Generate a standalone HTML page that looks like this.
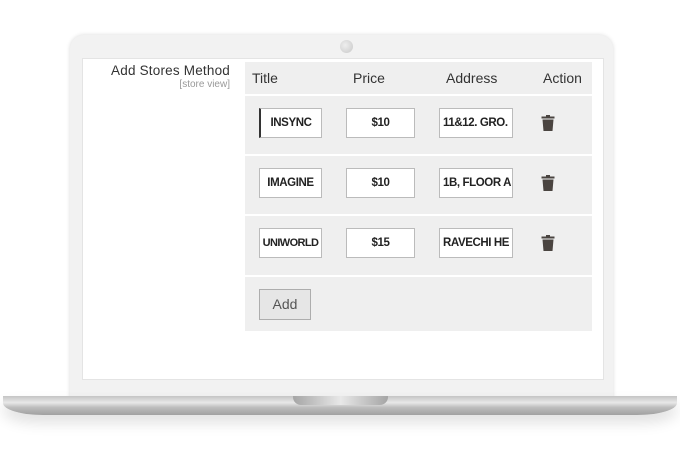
<!DOCTYPE html>
<html><head><style>
*{margin:0;padding:0;box-sizing:border-box}
body{width:680px;height:450px;background:#fff;position:relative;overflow:hidden;font-family:"Liberation Sans",sans-serif}
.bezel{position:absolute;left:70px;top:35px;width:543px;height:365px;background:#f2f2f2;border-radius:14px 14px 0 0;box-shadow:0 0 4px rgba(0,0,0,.15)}
.cam{position:absolute;left:340px;top:40px;width:13px;height:13px;border-radius:50%;background:radial-gradient(circle at 40% 40%,#eee,#c8c8c8)}
.screen{position:absolute;left:82px;top:58px;width:522px;height:322px;background:#fff;border:1px solid #e4e4e4}
.base{position:absolute;left:3px;top:396px;width:674px;height:19px;border-radius:0 0 40px 40px/0 0 12px 12px;background:linear-gradient(#c4c4c4,#e8e8e8 35%,#bdbdbd 60%,#a0a0a0);box-shadow:0 8px 14px rgba(0,0,0,.12)}
.notch{position:absolute;left:293px;top:396px;width:95px;height:9px;border-radius:0 0 8px 8px;background:linear-gradient(90deg,#a5a5a5,#e8e8e8 50%,#a5a5a5)}
.lbl{position:absolute;right:450px;top:63px;text-align:right;color:#333;font-size:13.5px;letter-spacing:.2px}
.lbl small{display:block;font-size:10px;color:#999;margin-top:1px;letter-spacing:0}
.tbl{position:absolute;left:245px;top:62px;width:347px;height:269px;background:#efefef}
.hd{position:absolute;top:8px;font-size:14px;color:#333}
.sep{position:absolute;left:0;width:347px;height:2px;background:#fff}
.in{position:absolute;height:30px;background:#fff;border:1px solid #bbb;font-size:11.5px;letter-spacing:-.4px;font-weight:bold;color:#222;text-align:center;line-height:28px;overflow:hidden;white-space:nowrap}
.add{position:absolute;left:14px;top:227px;width:52px;height:31px;background:#e6e6e6;border:1px solid #adadad;color:#555;font-size:14px;text-align:center;line-height:29px}
.tr{position:absolute;left:296px}
</style></head><body>
<div class="bezel"></div>
<div class="cam"></div>
<div class="screen"></div>
<div class="lbl">Add Stores Method<small>[store view]</small></div>
<div class="tbl">
<div class="hd" style="left:7px">Title</div>
<div class="hd" style="left:108px">Price</div>
<div class="hd" style="left:201px">Address</div>
<div class="hd" style="left:298px">Action</div>
<div class="sep" style="top:32px"></div>
<div class="sep" style="top:92px"></div>
<div class="sep" style="top:152px"></div>
<div class="sep" style="top:213px"></div>
<div class="in" style="left:14px;top:46px;width:63px;border-left:2px solid #333">INSYNC</div>
<div class="in" style="left:101px;top:46px;width:69px">$10</div>
<div class="in" style="left:194px;top:46px;width:74px;text-align:left;padding-left:3px">11&amp;12. GRO.</div>
<div class="in" style="left:14px;top:106px;width:63px">IMAGINE</div>
<div class="in" style="left:101px;top:106px;width:69px">$10</div>
<div class="in" style="left:194px;top:106px;width:74px;text-align:left;padding-left:3px">1B, FLOOR A</div>
<div class="in" style="left:14px;top:166px;width:63px;font-size:11px;letter-spacing:-.6px">UNIWORLD</div>
<div class="in" style="left:101px;top:166px;width:69px">$15</div>
<div class="in" style="left:194px;top:166px;width:74px;text-align:left;padding-left:3px">RAVECHI HE</div>
<svg class="tr" style="top:52px" width="14" height="18" viewBox="0 0 14 18"><path d="M5 1h4v1.5h4.5v2H.5v-2H5z M1.5 5.5h11l-1 11.5h-9z" fill="#4a4440"/></svg>
<svg class="tr" style="top:112px" width="14" height="18" viewBox="0 0 14 18"><path d="M5 1h4v1.5h4.5v2H.5v-2H5z M1.5 5.5h11l-1 11.5h-9z" fill="#4a4440"/></svg>
<svg class="tr" style="top:172px" width="14" height="18" viewBox="0 0 14 18"><path d="M5 1h4v1.5h4.5v2H.5v-2H5z M1.5 5.5h11l-1 11.5h-9z" fill="#4a4440"/></svg>
<div class="add">Add</div>
</div>
<div class="base"></div>
<div class="notch"></div>
</body></html>
